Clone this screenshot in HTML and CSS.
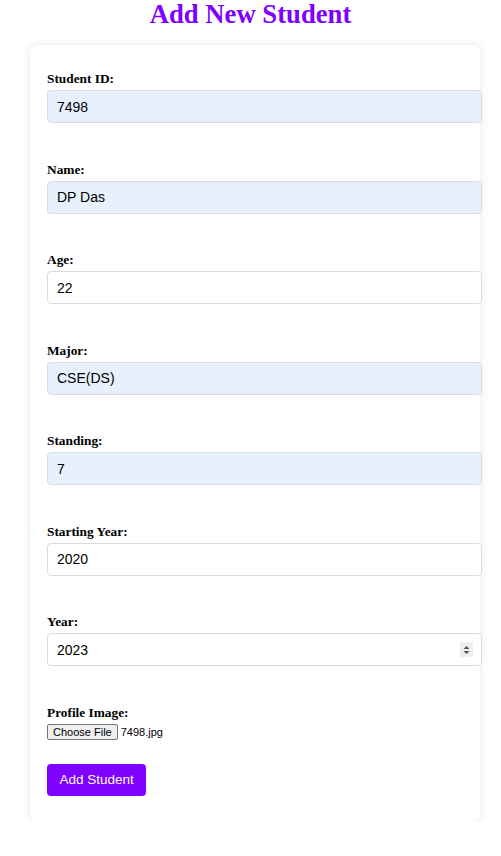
FILE: index.html
```html
<!DOCTYPE html>
<html>
<head>
<meta charset="utf-8">
<title>Add New Student</title>
<link rel="stylesheet" href="styles.css">
</head>
<body>
<h1 class="title">Add New Student</h1>
<form class="card">
  <div class="group">
    <label class="label">Student ID:</label>
    <input class="field autofill" type="text" value="7498">
  </div>
  <div class="group">
    <label class="label">Name:</label>
    <input class="field autofill" type="text" value="DP Das">
  </div>
  <div class="group">
    <label class="label">Age:</label>
    <input class="field" type="text" value="22">
  </div>
  <div class="group">
    <label class="label">Major:</label>
    <input class="field autofill" type="text" value="CSE(DS)">
  </div>
  <div class="group">
    <label class="label">Standing:</label>
    <input class="field autofill" type="text" value="7">
  </div>
  <div class="group">
    <label class="label">Starting Year:</label>
    <input class="field" type="text" value="2020">
  </div>
  <div class="group">
    <label class="label">Year:</label>
    <div class="number-wrap">
      <input class="field" type="text" value="2023">
      <span class="spinner">
        <svg width="7" height="10" viewBox="0 0 7 10"><path d="M3.5 1 L6.5 4 L0.5 4 Z M3.5 9 L6.5 6 L0.5 6 Z" fill="#555"/></svg>
      </span>
    </div>
  </div>
  <div class="group file-group">
    <label class="label">Profile Image:</label>
    <div class="file-row"><span class="file-btn">Choose File</span><span class="file-name">7498.jpg</span></div>
  </div>
  <button class="submit" type="button">Add Student</button>
</form>
</body>
</html>
```
FILE: styles.css
```css
body {
  margin: 0;
  font-family: "Liberation Serif", serif;
  background: #ffffff;
}
.title {
  margin: 0;
  font-size: 26.7px;
  line-height: 29.5px;
  font-weight: bold;
  text-align: center;
  color: #8000ff;
}
.card {
  margin: 15.5px 0 0 30px;
  width: 450px;
  box-sizing: border-box;
  padding: 26px 17px 26px;
  background: #fff;
  border-radius: 8px;
  box-shadow: 0 0 10px rgba(0, 0, 0, 0.1);
}
.group {
  margin-bottom: 38.5px;
}
.label {
  display: block;
  font-size: 13.33px;
  line-height: 15px;
  font-weight: bold;
  color: #000;
  margin-bottom: 4px;
}
.field {
  display: block;
  box-sizing: border-box;
  width: 435px;
  height: 33px;
  margin: 0;
  padding: 0 9px;
  border: 1px solid #dcdcdc;
  border-radius: 4px;
  font-family: "Liberation Sans", Arial, sans-serif;
  font-size: 14px;
  color: #000;
  background: #fff;
  outline: none;
}
.autofill {
  background: #e8f0fe;
}
.number-wrap {
  position: relative;
  width: 435px;
}
.spinner {
  position: absolute;
  left: 413px;
  top: 9px;
  width: 13px;
  height: 15px;
  background: #efefef;
  display: flex;
  align-items: center;
  justify-content: center;
}
.file-group {
  margin-bottom: 24px;
}
.file-row {
  display: flex;
  align-items: center;
  gap: 3px;
  font-family: "Liberation Sans", Arial, sans-serif;
  font-size: 11px;
  color: #000;
}
.file-btn {
  display: inline-block;
  box-sizing: border-box;
  height: 16px;
  line-height: 14px;
  padding: 0 5px;
  border: 1px solid #767676;
  border-radius: 2px;
  background: #efefef;
}
.submit {
  display: block;
  height: 32px;
  padding: 0 12.5px;
  border: none;
  border-radius: 4px;
  background: #8000ff;
  color: #fff;
  font-family: "Liberation Sans", Arial, sans-serif;
  font-size: 13.5px;
}
```
